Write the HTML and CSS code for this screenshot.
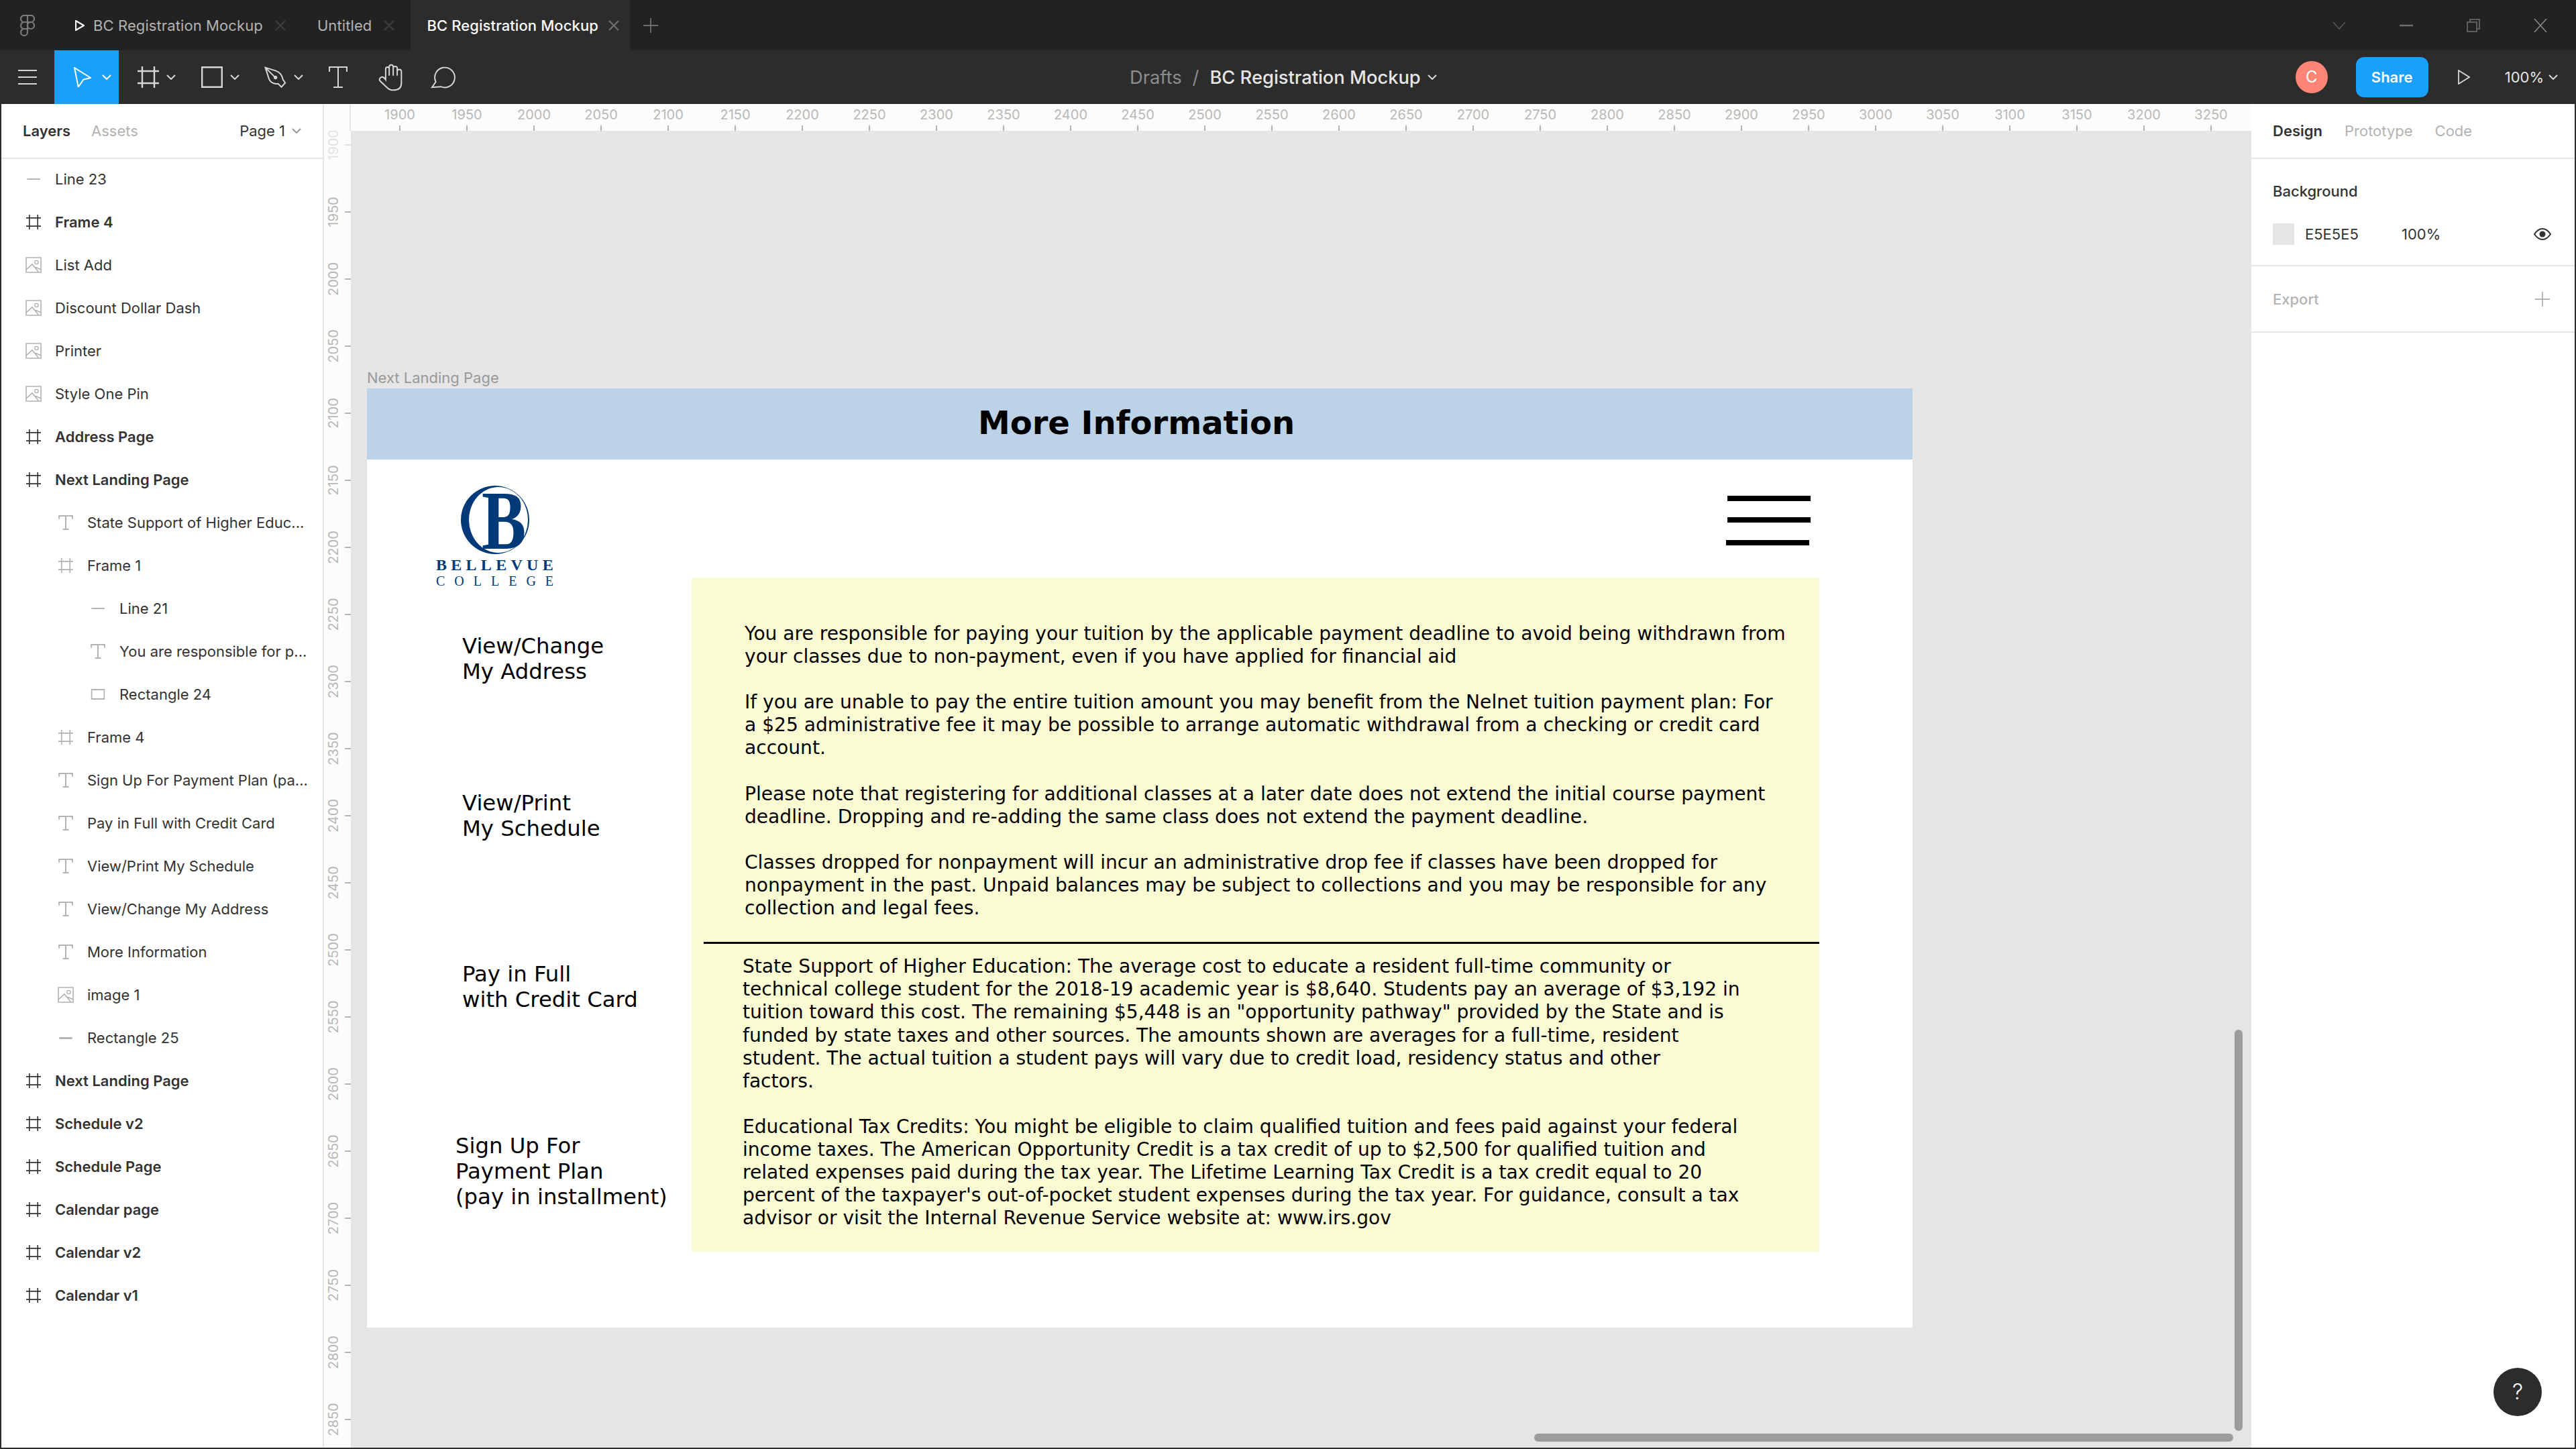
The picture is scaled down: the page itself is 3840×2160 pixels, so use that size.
FILE: index.html
```html
<!DOCTYPE html>
<html lang="en">

<head>
    <meta charset="UTF-8">
    <meta name="viewport" content="width=device-width, initial-scale=1.0">
    <title>BC Registration Mockup</title>
    <link rel="stylesheet" href="styles.css">
</head>

<body>
    <svg class="defs" width="0" height="0">
        <symbol id="i-hash" viewBox="0 0 32 32"><path d="M7 0V32M25 0V32M0 7H32M0 25H32" fill="none" stroke="currentColor" stroke-width="2.4"/></symbol>
        <symbol id="i-img" viewBox="0 0 24 24"><path d="M1 1H23V23H1ZM1 19L10 11L20 23M14 15L23 19" fill="none" stroke="currentColor" stroke-width="1.6"/><circle cx="16.500" cy="8" r="2.600" fill="none" stroke="currentColor" stroke-width="1.4"/></symbol>
        <symbol id="i-text" viewBox="0 0 20 20"><path d="M1 5V1H19V5M10 1V19M6 19H14" fill="none" stroke="currentColor" stroke-width="1.8"/></symbol>
        <symbol id="i-chev" viewBox="0 0 14 8"><path d="M1 1L7 7L13 1" fill="none" stroke="currentColor" stroke-width="2"/></symbol>
        <symbol id="i-x" viewBox="0 0 16 16"><path d="M1 1L15 15M15 1L1 15" fill="none" stroke="currentColor" stroke-width="2.4"/></symbol>
    </svg>

    <div class="app">
        <!-- tab bar -->
        <div class="titlebar">
            <svg class="figma-logo" viewBox="0 0 22 32" fill="none" stroke="currentColor" stroke-width="2.2">
                <path d="M11 1H6a5 5 0 0 0 0 10h5ZM11 1h5a5 5 0 0 1 0 10h-5ZM11 11H6a5 5 0 0 0 0 10h5ZM11 16a5 5 0 1 0 10 0a5 5 0 1 0 -10 0ZM11 21H6a5 5 0 1 0 5 5Z"/>
            </svg>
            <div class="tab tab-first">
                <svg class="tab-play" viewBox="0 0 14 16"><path d="M1 1L13 8L1 15Z" fill="none" stroke="#fff" stroke-width="2.2"/></svg>
                <span>BC Registration Mockup</span>
                <svg class="tab-x"><use href="#i-x"/></svg>
            </div>
            <div class="tab tab-second">
                <span>Untitled</span>
                <svg class="tab-x"><use href="#i-x"/></svg>
            </div>
            <div class="tab tab-active">
                <span>BC Registration Mockup</span>
                <svg class="tab-x"><use href="#i-x"/></svg>
            </div>
            <svg class="tab-plus" viewBox="0 0 24 24"><path d="M12 0V24M0 12H24" stroke="currentColor" stroke-width="2"/></svg>
            <div class="window-btns">
                <svg class="win-chev" viewBox="0 0 20 12"><path d="M1 1L10 11L19 1" fill="none" stroke="currentColor" stroke-width="1.5"/></svg>
                <svg class="win-min" viewBox="0 0 20 20"><path d="M0 10H20" stroke="currentColor" stroke-width="2.5"/></svg>
                <svg class="win-max" viewBox="0 0 20 20"><path d="M5 4V1H19V15H15M1 5H15V19H1Z" fill="none" stroke="currentColor" stroke-width="2"/></svg>
                <svg class="win-close" viewBox="0 0 20 20"><path d="M1 0L19 20M19 0L1 20" fill="none" stroke="currentColor" stroke-width="1.6"/></svg>
            </div>
        </div>

        <!-- tools -->
        <div class="toolbar">
            <svg class="menu-icon" viewBox="0 0 28 22"><path d="M0 1H28M0 11H28M0 21H28" stroke="currentColor" stroke-width="2"/></svg>
            <div class="tool tool-move">
                <svg class="tool-arrow" viewBox="0 0 26 30"><path d="M1 1L25 16L14.300 18.700L6.700 29.700Z" fill="none" stroke="currentColor" stroke-width="2"/></svg>
                <svg class="chev"><use href="#i-chev"/></svg>
            </div>
            <div class="tool tool-drop">
                <svg class="tool-icon"><use href="#i-hash"/></svg>
                <svg class="chev"><use href="#i-chev"/></svg>
            </div>
            <div class="tool tool-drop">
                <svg class="tool-icon" viewBox="0 0 32 32"><path d="M1.200 1.200H30.800V30.800H1.200Z" fill="none" stroke="currentColor" stroke-width="2.400"/></svg>
                <svg class="chev"><use href="#i-chev"/></svg>
            </div>
            <div class="tool tool-drop">
                <svg class="tool-pen" viewBox="40 40 105 100"><path d="M47 45L95 60Q120 68 127 100L137 114L120 133L105 118Q78 122 65 100ZM47 45L90 88" fill="none" stroke="currentColor" stroke-width="6"/><circle cx="93" cy="90" r="8" fill="currentColor"/></svg>
                <svg class="chev"><use href="#i-chev"/></svg>
            </div>
            <svg class="tool-t" viewBox="0 0 28 32"><path d="M1 8V1H27V8M14 1V31M7 31H21" fill="none" stroke="currentColor" stroke-width="2"/></svg>
            <svg class="tool-hand" viewBox="555 28 113 124"><path d="M590 100V52Q590 43 598 43Q606 43 606 52V42Q606 33 615 33Q624 33 624 42V47Q624 40 633 40Q642 40 642 48V62Q642 54 651 54Q661 54 661 64V115Q661 147 625 147Q608 147 597 136L565 106Q558 98 568 90Q578 82 590 100ZM606 52V82M624 47V82M642 62V82" fill="none" stroke="currentColor" stroke-width="6"/></svg>
            <svg class="tool-comment" viewBox="792 38 115 102"><path d="M798 135L815 110A45 45 0 1 1 838 132Z" fill="none" stroke="currentColor" stroke-width="6"/></svg>
            <div class="crumbs">
                <span class="crumb-dim">Drafts</span>
                <span class="crumb-dim crumb-slash">/</span>
                <span class="crumb-name">BC Registration Mockup</span>
                <svg class="chev"><use href="#i-chev"/></svg>
            </div>
            <div class="avatar">C</div>
            <div class="share">Share</div>
            <svg class="present" viewBox="0 0 18 22"><path d="M1 1L17 11L1 21Z" fill="none" stroke="currentColor" stroke-width="1.8"/></svg>
            <div class="zoom-level">100%</div>
            <svg class="chev"><use href="#i-chev"/></svg>
        </div>

        <div class="workspace">
            <!-- left panel -->
            <aside class="layers">
                <div class="panel-tabs">
                    <span class="on">Layers</span>
                    <span>Assets</span>
                    <span class="page-pick">Page 1 <svg class="chev"><use href="#i-chev"/></svg></span>
                </div>
                <ul class="layer-list">
                    <li><span class="ic-line"></span>Line 23</li>
                    <li class="top"><svg class="ic"><use href="#i-hash"/></svg>Frame 4</li>
                    <li><svg class="ic ic-img"><use href="#i-img"/></svg>List Add</li>
                    <li><svg class="ic ic-img"><use href="#i-img"/></svg>Discount Dollar Dash</li>
                    <li><svg class="ic ic-img"><use href="#i-img"/></svg>Printer</li>
                    <li><svg class="ic ic-img"><use href="#i-img"/></svg>Style One Pin</li>
                    <li class="top"><svg class="ic"><use href="#i-hash"/></svg>Address Page</li>
                    <li class="top"><svg class="ic"><use href="#i-hash"/></svg>Next Landing Page</li>
                    <li class="lv1"><svg class="ic ic-t"><use href="#i-text"/></svg>State Support of Higher Educ...</li>
                    <li class="lv1"><svg class="ic"><use href="#i-hash"/></svg>Frame 1</li>
                    <li class="lv2"><span class="ic-line"></span>Line 21</li>
                    <li class="lv2"><svg class="ic ic-t"><use href="#i-text"/></svg>You are responsible for p...</li>
                    <li class="lv2"><span class="ic-rect"></span>Rectangle 24</li>
                    <li class="lv1"><svg class="ic"><use href="#i-hash"/></svg>Frame 4</li>
                    <li class="lv1"><svg class="ic ic-t"><use href="#i-text"/></svg>Sign Up For Payment Plan (pa...</li>
                    <li class="lv1"><svg class="ic ic-t"><use href="#i-text"/></svg>Pay in Full with Credit Card</li>
                    <li class="lv1"><svg class="ic ic-t"><use href="#i-text"/></svg>View/Print My Schedule</li>
                    <li class="lv1"><svg class="ic ic-t"><use href="#i-text"/></svg>View/Change My Address</li>
                    <li class="lv1"><svg class="ic ic-t"><use href="#i-text"/></svg>More Information</li>
                    <li class="lv1"><svg class="ic ic-img"><use href="#i-img"/></svg>image 1</li>
                    <li class="lv1"><span class="ic-line ic-line-thick"></span>Rectangle 25</li>
                    <li class="top"><svg class="ic"><use href="#i-hash"/></svg>Next Landing Page</li>
                    <li class="top"><svg class="ic"><use href="#i-hash"/></svg>Schedule v2</li>
                    <li class="top"><svg class="ic"><use href="#i-hash"/></svg>Schedule Page</li>
                    <li class="top"><svg class="ic"><use href="#i-hash"/></svg>Calendar page</li>
                    <li class="top"><svg class="ic"><use href="#i-hash"/></svg>Calendar v2</li>
                    <li class="top"><svg class="ic"><use href="#i-hash"/></svg>Calendar v1</li>
                </ul>
            </aside>

            <!-- canvas with rulers -->
            <main class="stage">
                <div class="ruler-x">
                    <div class="ruler-corner"></div>
                    <span>1900</span><span>1950</span><span>2000</span><span>2050</span><span>2100</span><span>2150</span><span>2200</span>
                    <span>2250</span><span>2300</span><span>2350</span><span>2400</span><span>2450</span><span>2500</span><span>2550</span>
                    <span>2600</span><span>2650</span><span>2700</span><span>2750</span><span>2800</span><span>2850</span><span>2900</span>
                    <span>2950</span><span>3000</span><span>3050</span><span>3100</span><span>3150</span><span>3200</span><span>3250</span>
                </div>
                <div class="stage-body">
                    <div class="ruler-y">
                        <span class="faded"><b>1900</b></span><span><b>1950</b></span><span><b>2000</b></span><span><b>2050</b></span><span><b>2100</b></span>
                        <span><b>2150</b></span><span><b>2200</b></span><span><b>2250</b></span><span><b>2300</b></span><span><b>2350</b></span>
                        <span><b>2400</b></span><span><b>2450</b></span><span><b>2500</b></span><span><b>2550</b></span><span><b>2600</b></span>
                        <span><b>2650</b></span><span><b>2700</b></span><span><b>2750</b></span><span><b>2800</b></span><span><b>2850</b></span>
                    </div>
                    <div class="canvas">
                        <div class="frame-name">Next Landing Page</div>
                        <div class="frame">
                            <div class="frame-head">More Information</div>
                            <div class="frame-body">
                                <div class="side">
                                    <div class="logo">
                                        <svg class="logo-mark" viewBox="0 0 104 104">
                                            <path d="M52 1A51 51 0 1 0 52 103A51 51 0 1 0 52 1ZM57 3A44 49 0 1 1 57 101A44 49 0 1 1 57 3Z" fill="#003a78" fill-rule="evenodd"/>
                                            <text transform="translate(65 95) scale(.8 1)" text-anchor="middle" class="logo-b">B</text>
                                        </svg>
                                        <div class="logo-name">BELLEVUE</div>
                                        <div class="logo-sub">COLLEGE</div>
                                    </div>
                                    <div class="side-link link-address">View/Change<br>My Address</div>
                                    <div class="side-link link-schedule">View/Print<br>My Schedule</div>
                                    <div class="side-link link-full">Pay in Full<br>with Credit Card</div>
                                    <div class="side-link link-plan">Sign Up For<br>Payment Plan<br>(pay in installment)</div>
                                </div>
                                <div class="main-col">
                                    <div class="burger"><i></i><i></i><i></i></div>
                                    <div class="info-box">
                                        <p class="info-top">You are responsible for paying your tuition by the applicable payment deadline to avoid being withdrawn from<br>your classes due to non-payment, even if you have applied for financial aid<br><br>If you are unable to pay the entire tuition amount you may benefit from the Nelnet tuition payment plan: For<br>a $25 administrative fee it may be possible to arrange automatic withdrawal from a checking or credit card<br>account.<br><br>Please note that registering for additional classes at a later date does not extend the initial course payment<br>deadline. Dropping and re-adding the same class does not extend the payment deadline.<br><br>Classes dropped for nonpayment will incur an administrative drop fee if classes have been dropped for<br>nonpayment in the past. Unpaid balances may be subject to collections and you may be responsible for any<br>collection and legal fees.</p>
                                        <hr class="info-rule">
                                        <p class="info-bottom">State Support of Higher Education: The average cost to educate a resident full-time community or<br>technical college student for the 2018-19 academic year is $8,640. Students pay an average of $3,192 in<br>tuition toward this cost. The remaining $5,448 is an "opportunity pathway" provided by the State and is<br>funded by state taxes and other sources. The amounts shown are averages for a full-time, resident<br>student. The actual tuition a student pays will vary due to credit load, residency status and other<br>factors.<br><br>Educational Tax Credits: You might be eligible to claim qualified tuition and fees paid against your federal<br>income taxes. The American Opportunity Credit is a tax credit of up to $2,500 for qualified tuition and<br>related expenses paid during the tax year. The Lifetime Learning Tax Credit is a tax credit equal to 20<br>percent of the taxpayer's out-of-pocket student expenses during the tax year. For guidance, consult a tax<br>advisor or visit the Internal Revenue Service website at: www.irs.gov</p>
                                    </div>
                                </div>
                            </div>
                        </div>
                        <div class="scroll-v"></div>
                        <div class="scroll-h"></div>
                    </div>
                </div>
            </main>

            <!-- right panel -->
            <aside class="props">
                <div class="panel-tabs props-tabs">
                    <span class="on">Design</span>
                    <span>Prototype</span>
                    <span>Code</span>
                </div>
                <div class="props-section bg-section">
                    <div class="props-title">Background</div>
                    <div class="bg-row">
                        <span class="swatch"></span>
                        <span class="bg-hex">E5E5E5</span>
                        <span class="bg-pct">100%</span>
                        <svg class="eye" viewBox="0 0 26 18"><path d="M1 9C5 3 9 1 13 1S21 3 25 9C21 15 17 17 13 17S5 15 1 9Z" fill="none" stroke="#333" stroke-width="2"/><circle cx="13" cy="9" r="4.5" fill="#333"/></svg>
                    </div>
                </div>
                <div class="props-section export-section">
                    <span>Export</span>
                    <svg class="export-plus" viewBox="0 0 22 22"><path d="M11 0V22M0 11H22" stroke="currentColor" stroke-width="1.8"/></svg>
                </div>
                <div class="help">?</div>
            </aside>
        </div>
    </div>
</body>

</html>
```
FILE: styles.css
```css
* {
    margin: 0;
    padding: 0;
    box-sizing: border-box;
}

body {
    width: 3840px;
    height: 2160px;
    overflow: hidden;
    font-family: Inter, "Liberation Sans", sans-serif;
    font-size: 22px;
    color: #333;
    background: #2c2c2c;
}

.defs {
    position: absolute;
}

.app {
    width: 3840px;
    height: 2160px;
    display: flex;
    flex-direction: column;
    border-bottom: 2px solid #2c2c2c;
}

/* title bar */
.titlebar {
    height: 75px;
    flex: none;
    display: flex;
    align-items: center;
    background: #222;
    color: #b3b3b3;
    letter-spacing: .1px;
}

.figma-logo {
    width: 22px;
    height: 32px;
    margin-left: 30px;
    color: #7a7a7a;
}

.tab {
    height: 75px;
    display: flex;
    align-items: center;
}

.tab-first {
    margin-left: 60px;
}

.tab-play {
    width: 14px;
    height: 16px;
    margin-right: 13px;
}

.tab-x {
    width: 16px;
    height: 16px;
    margin-left: 18px;
    color: #3c3c3c;
}

.tab-second {
    margin-left: 47px;
}

.tab-active {
    width: 327px;
    margin-left: 24px;
    padding-left: 24px;
    background: #2c2c2c;
    color: #fff;
    font-weight: 500;
}

.tab-active .tab-x {
    margin-left: 15px;
    color: #6e6e6e;
}

.tab-plus {
    width: 22px;
    height: 22px;
    margin-left: 20px;
    color: #6e6e6e;
}

.window-btns {
    margin-left: auto;
    display: flex;
    align-items: center;
    color: #6e6e6e;
}

.win-chev {
    width: 20px;
    height: 12px;
    margin-right: 80px;
    color: #5a5a5a;
}

.win-min,
.win-max,
.win-close {
    width: 20px;
    height: 20px;
    margin-right: 80px;
}

.win-max {
    color: #5e5e5e;
}

.win-close {
    margin-right: 43px;
    color: #888;
}

/* toolbar */
.toolbar {
    height: 80px;
    flex: none;
    display: flex;
    align-items: center;
    background: #2c2c2c;
    color: #d6d6d6;
}

.menu-icon {
    width: 28px;
    height: 22px;
    margin-left: 27px;
    margin-right: 26px;
}

.chev {
    width: 14px;
    height: 8px;
    flex: none;
}

.tool {
    display: flex;
    align-items: center;
}

.tool-move {
    width: 96px;
    height: 80px;
    padding-left: 29px;
    background: #18a0fb;
    color: #fff;
}

.tool-arrow {
    width: 26px;
    height: 30px;
    margin-right: 16px;
}

.tool-drop {
    margin-left: 28px;
}

.tool-icon {
    width: 32px;
    height: 32px;
    margin-right: 11px;
}

.tool-pen {
    width: 35px;
    height: 33px;
    margin-left: -2px;
    margin-right: 10px;
}

.tool-drop + .tool-drop {
    margin-left: 38px;
}

.tool-t {
    width: 28px;
    height: 32px;
    margin-left: 38px;
}

.tool-hand {
    width: 38px;
    height: 41px;
    margin-left: 45px;
}

.tool-comment {
    width: 38px;
    height: 34px;
    margin-left: 41px;
}

.crumbs {
    display: flex;
    align-items: center;
    margin-left: 1004px;
    font-size: 27.3px;
}

.crumb-dim {
    color: #8c8c8c;
}

.crumb-slash {
    margin: 0 16px;
}

.crumb-name {
    margin-right: 10px;
    color: #e6e6e6;
    font-weight: 500;
}

.avatar {
    width: 48px;
    height: 48px;
    margin-left: auto;
    border-radius: 50%;
    background: #ff8577;
    color: #fff;
    font-size: 24px;
    line-height: 48px;
    text-align: center;
}

.share {
    width: 108px;
    height: 60px;
    margin-left: 42px;
    border-radius: 12px;
    background: #18a0fb;
    color: #fff;
    font-weight: 600;
    line-height: 60px;
    text-align: center;
}

.present {
    width: 18px;
    height: 22px;
    margin-left: 44px;
}

.zoom-level {
    margin-left: 52px;
    margin-right: 7px;
    color: #e6e6e6;
}

.toolbar > .chev:last-child {
    margin-right: 27px;
}

/* panels */
.workspace {
    flex: 1;
    min-height: 0;
    display: flex;
    border-left: 2px solid #2c2c2c;
    border-right: 2px solid #2c2c2c;
    background: #fff;
}

.layers {
    width: 481px;
    flex: none;
    border-right: 2px solid #e5e5e5;
    overflow: hidden;
}

.panel-tabs {
    height: 82px;
    display: flex;
    align-items: center;
    gap: 31px;
    padding: 0 32px;
    border-bottom: 2px solid #e5e5e5;
    color: #b3b3b3;
}

.panel-tabs .on {
    color: #333;
    font-weight: 600;
}

.props-tabs {
    gap: 33px;
}

.page-pick {
    margin-left: auto;
    display: flex;
    align-items: center;
    gap: 10px;
    color: #333;
}

.page-pick .chev {
    color: #999;
}

.layer-list {
    list-style: none;
    margin-top: -2px;
}

.layer-list li {
    height: 64px;
    display: flex;
    align-items: center;
    padding-left: 36px;
    white-space: nowrap;
}

.layer-list li.top {
    font-weight: 600;
}

.layer-list li.lv1 {
    padding-left: 84px;
}

.layer-list li.lv2 {
    padding-left: 132px;
}

.ic,
.ic-line,
.ic-rect {
    flex: none;
    width: 24px;
    height: 22px;
    margin-right: 20px;
    color: #333;
}

.ic-img,
.ic-t,
.lv1 .ic,
.lv2 .ic {
    color: #b3b3b3;
}

.ic-img {
    height: 24px;
}

.ic-line {
    height: 2px;
    background: #b3b3b3;
    transform: scaleX(.8);
}

.ic-line-thick {
    height: 3px;
}

.ic-rect {
    height: 16px;
    border: 2px solid #b3b3b3;
    transform: scaleX(.85);
}

/* rulers + canvas */
.stage {
    flex: 1;
    min-width: 0;
    display: flex;
    flex-direction: column;
    background: #fcfcfc;
}

.ruler-x {
    height: 40px;
    flex: none;
    display: flex;
    overflow: hidden;
    color: #b8b8b8;
    font-size: 20px;
}

.ruler-corner {
    border-right: 2px solid #e5e5e5;
    width: 40px;
    flex: none;
    margin-right: 23px;
}

.ruler-x span {
    width: 100px;
    flex: none;
    position: relative;
    padding-top: 4px;
    line-height: 24px;
    text-align: center;
}

.ruler-x span::after {
    content: "";
    position: absolute;
    left: 49px;
    bottom: 0;
    width: 2px;
    height: 8px;
    background: #b3b3b3;
}

.stage-body {
    flex: 1;
    min-height: 0;
    display: flex;
}

.ruler-y {
    width: 40px;
    flex: none;
    overflow: hidden;
    color: #b8b8b8;
    font-size: 20px;
}

.ruler-y span {
    display: block;
    height: 100px;
    position: relative;
}

.ruler-y span:first-child {
    margin-top: -29px;
}

.ruler-y span::after {
    content: "";
    position: absolute;
    right: 0;
    top: 49px;
    width: 9px;
    height: 2px;
    background: #b3b3b3;
}

.ruler-y b {
    position: absolute;
    left: -16px;
    top: 38px;
    width: 60px;
    font-weight: 400;
    line-height: 24px;
    text-align: center;
    transform: rotate(-90deg);
}

.ruler-y .faded {
    color: #e2e2e2;
}

.ruler-y .faded::after {
    background: #e2e2e2;
}

.canvas {
    flex: 1;
    min-width: 0;
    position: relative;
    overflow: hidden;
    background: #e5e5e5;
    padding: 354px 0 0 24px;
}

.frame-name {
    height: 30px;
    color: #999;
    line-height: 28px;
}

.frame {
    width: 2304px;
    height: 1400px;
    background: #fff;
    color: #000;
    font-family: "DejaVu Sans", Verdana, sans-serif;
}

.frame-head {
    height: 106px;
    padding-right: 10px;
    background: #bcd2e6;
    font-size: 48px;
    font-weight: 700;
    line-height: 102px;
    text-align: center;
}

.frame-body {
    display: grid;
    grid-template-columns: 484px 1681px;
}

/* left column of the mockup */
.logo {
    width: 175px;
    margin: 38px 0 0 103px;
    display: flex;
    flex-direction: column;
    align-items: center;
    color: #003a78;
    font-family: "Liberation Serif", serif;
}

.logo-mark {
    width: 104px;
    height: 104px;
    overflow: visible;
}

.logo-b {
    font-family: "Liberation Serif", serif;
    font-size: 124px;
    font-weight: 700;
    fill: #003a78;
}

.logo-name {
    height: 24px;
    margin-top: 3px;
    margin-right: -6px;
    font-size: 24px;
    font-weight: 700;
    line-height: 24px;
    letter-spacing: 6.3px;
    white-space: nowrap;
}

.logo-sub {
    height: 18px;
    margin-top: 3px;
    margin-right: -14px;
    font-size: 20px;
    line-height: 18px;
    letter-spacing: 14px;
    white-space: nowrap;
}

.side-link {
    font-size: 32.3px;
    line-height: 38px;
    margin-left: 142px;
    white-space: nowrap;
}

.link-address {
    margin-top: 69px;
}

.link-schedule {
    margin-top: 158px;
}

.link-full {
    margin-top: 179px;
}

.link-plan {
    margin-top: 180px;
    margin-left: 132px;
}

/* right column of the mockup */
.burger {
    width: 124px;
    height: 176px;
    margin-left: auto;
    margin-right: 13px;
    padding-top: 54px;
}

.burger i {
    display: block;
    height: 8px;
    margin-bottom: 24px;
    background: #000;
}

.burger i:nth-child(2) {
    margin-bottom: 26px;
}

.burger i:last-child {
    transform: translateX(-2px);
}

.info-box {
    height: 1005px;
    padding-top: 67px;
    background: #fbfbd3;
    font-size: 28.1px;
    line-height: 34.1px;
    white-space: nowrap;
}

.info-top {
    padding-left: 79px;
}

.info-rule {
    height: 3px;
    margin: 33px 0 17px 18px;
    border: 0;
    background: #000;
}

.info-bottom {
    padding-left: 76px;
}

.scroll-v {
    position: absolute;
    left: 2808px;
    top: 1340px;
    width: 12px;
    height: 598px;
    border-radius: 6px;
    background: #9c9c9c;
}

.scroll-h {
    position: absolute;
    left: 1764px;
    top: 1942px;
    width: 1042px;
    height: 12px;
    border-radius: 6px;
    background: #9c9c9c;
}

/* right panel */
.props {
    width: 482px;
    flex: none;
    position: relative;
}

.props-section {
    border-bottom: 2px solid #e5e5e5;
    padding: 0 32px;
}

.bg-section {
    height: 160px;
    padding-top: 34px;
}

.props-title {
    color: #333;
    font-weight: 500;
    line-height: 28px;
}

.bg-row {
    display: flex;
    align-items: center;
    margin-top: 34px;
}

.swatch {
    width: 32px;
    height: 32px;
    margin-right: 16px;
    background: #e5e5e5;
}

.bg-hex {
    width: 144px;
}

.eye {
    width: 26px;
    height: 18px;
    margin-left: auto;
    margin-right: 3px;
}

.export-section {
    height: 99px;
    display: flex;
    align-items: center;
    justify-content: space-between;
    color: #b3b3b3;
    font-weight: 500;
}

.export-plus {
    width: 22px;
    height: 22px;
    margin-right: 5px;
    font-weight: 400;
}

.help {
    position: absolute;
    right: 49px;
    bottom: 47px;
    width: 72px;
    height: 72px;
    border-radius: 50%;
    background: #2c2c2c;
    color: #fff;
    font-size: 32px;
    font-weight: 300;
    line-height: 72px;
    text-align: center;
}
```
